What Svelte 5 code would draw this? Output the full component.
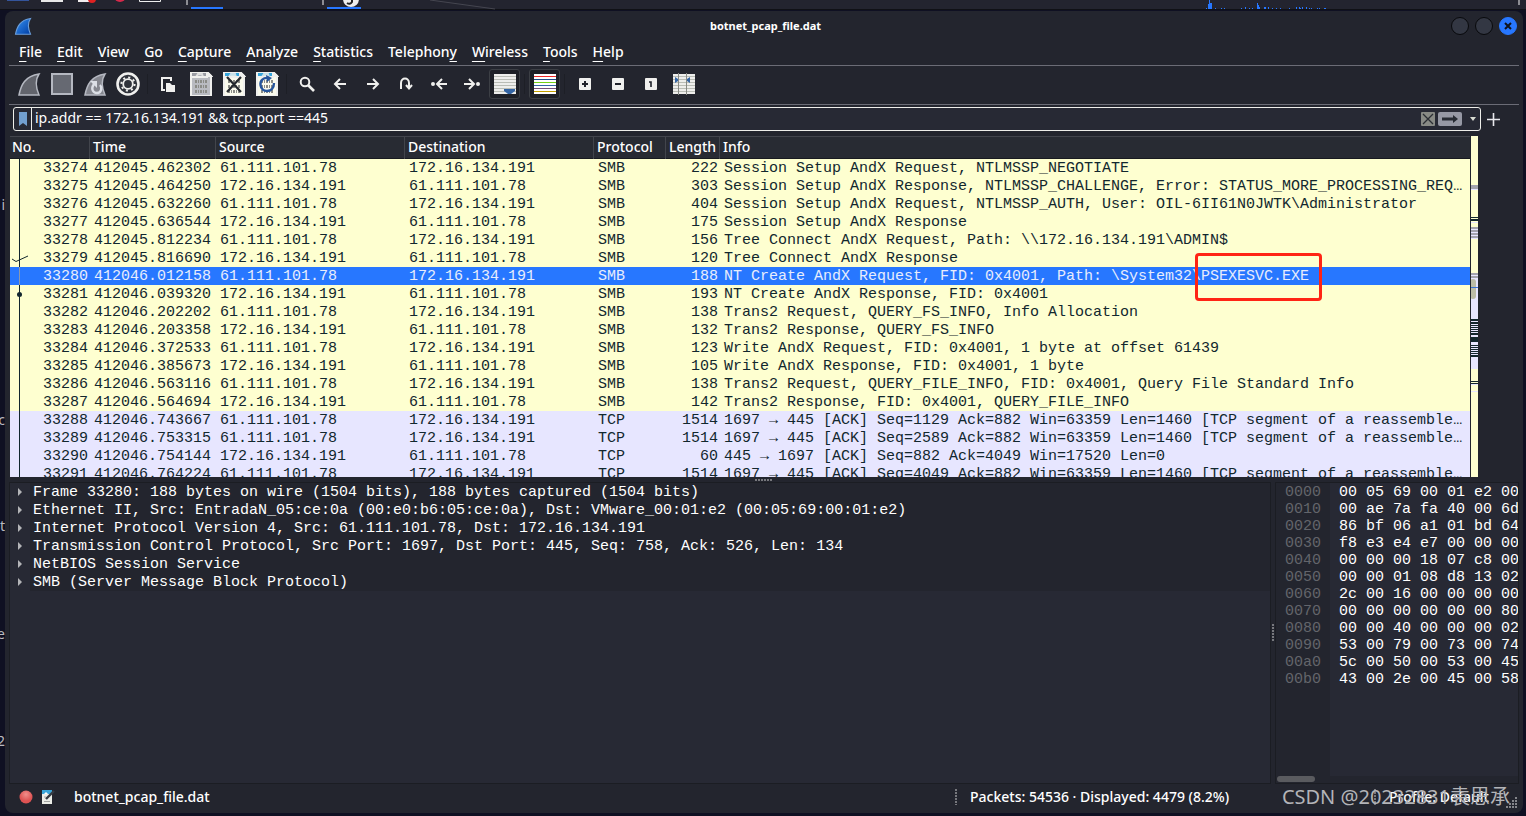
<script>
  const menus = [
    ['', 'F', 'ile'], ['', 'E', 'dit'], ['', 'V', 'iew'], ['', 'G', 'o'], ['', 'C', 'apture'], ['', 'A', 'nalyze'],
    ['', 'S', 'tatistics'], ['Telephon', 'y', ''], ['', 'W', 'ireless'], ['', 'T', 'ools'], ['', 'H', 'elp']
  ];
  const tools = [
    'start', 'stop', 'restart', 'options', '|', 'open', 'save', 'close', 'reload', '|', 'find', 'back', 'forward',
    'goto', 'first', 'last', 'autoscroll', '|', 'colorize', '|', 'zoomin', 'zoomout', 'zoomreset', 'resize'
  ];
  const columns = ['No.', 'Time', 'Source', 'Destination', 'Protocol', 'Length', 'Info'];
  const A = '61.111.101.78';
  const B = '172.16.134.191';
  const packets = [
    [33274, '412045.462302', A, B, 'SMB', 222, 'Session Setup AndX Request, NTLMSSP_NEGOTIATE'],
    [33275, '412045.464250', B, A, 'SMB', 303, 'Session Setup AndX Response, NTLMSSP_CHALLENGE, Error: STATUS_MORE_PROCESSING_REQUIRED'],
    [33276, '412045.632260', A, B, 'SMB', 404, 'Session Setup AndX Request, NTLMSSP_AUTH, User: OIL-6II61N0JWTK\\Administrator'],
    [33277, '412045.636544', B, A, 'SMB', 175, 'Session Setup AndX Response'],
    [33278, '412045.812234', A, B, 'SMB', 156, 'Tree Connect AndX Request, Path: \\\\172.16.134.191\\ADMIN$'],
    [33279, '412045.816690', B, A, 'SMB', 120, 'Tree Connect AndX Response'],
    [33280, '412046.012158', A, B, 'SMB', 188, 'NT Create AndX Request, FID: 0x4001, Path: \\System32\\', 'PSEXESVC.EXE'],
    [33281, '412046.039320', B, A, 'SMB', 193, 'NT Create AndX Response, FID: 0x4001'],
    [33282, '412046.202202', A, B, 'SMB', 138, 'Trans2 Request, QUERY_FS_INFO, Info Allocation'],
    [33283, '412046.203358', B, A, 'SMB', 132, 'Trans2 Response, QUERY_FS_INFO'],
    [33284, '412046.372533', A, B, 'SMB', 123, 'Write AndX Request, FID: 0x4001, 1 byte at offset 61439'],
    [33285, '412046.385673', B, A, 'SMB', 105, 'Write AndX Response, FID: 0x4001, 1 byte'],
    [33286, '412046.563116', A, B, 'SMB', 138, 'Trans2 Request, QUERY_FILE_INFO, FID: 0x4001, Query File Standard Info'],
    [33287, '412046.564694', B, A, 'SMB', 142, 'Trans2 Response, FID: 0x4001, QUERY_FILE_INFO'],
    [33288, '412046.743667', A, B, 'TCP', 1514, '1697 → 445 [ACK] Seq=1129 Ack=882 Win=63359 Len=1460 [TCP segment of a reassembled PDU]'],
    [33289, '412046.753315', A, B, 'TCP', 1514, '1697 → 445 [ACK] Seq=2589 Ack=882 Win=63359 Len=1460 [TCP segment of a reassembled PDU]'],
    [33290, '412046.754144', B, A, 'TCP', 60, '445 → 1697 [ACK] Seq=882 Ack=4049 Win=17520 Len=0'],
    [33291, '412046.764224', A, B, 'TCP', 1514, '1697 → 445 [ACK] Seq=4049 Ack=882 Win=63359 Len=1460 [TCP segment of a reassembled PDU]']
  ];
  const details = [
    'Frame 33280: 188 bytes on wire (1504 bits), 188 bytes captured (1504 bits)',
    'Ethernet II, Src: EntradaN_05:ce:0a (00:e0:b6:05:ce:0a), Dst: VMware_00:01:e2 (00:05:69:00:01:e2)',
    'Internet Protocol Version 4, Src: 61.111.101.78, Dst: 172.16.134.191',
    'Transmission Control Protocol, Src Port: 1697, Dst Port: 445, Seq: 758, Ack: 526, Len: 134',
    'NetBIOS Session Service',
    'SMB (Server Message Block Protocol)'
  ];
  const bytes = [
    '00 05 69 00 01 e2 00', '00 ae 7a fa 40 00 6d', '86 bf 06 a1 01 bd 64', 'f8 e3 e4 e7 00 00 00',
    '00 00 00 18 07 c8 00', '00 00 01 08 d8 13 02', '2c 00 16 00 00 00 00', '00 00 00 00 00 00 80',
    '00 00 40 00 00 00 02', '53 00 79 00 73 00 74', '5c 00 50 00 53 00 45', '43 00 2e 00 45 00 58'
  ];
  const offsets = bytes.map((_, i) => (i * 16).toString(16).padStart(4, '0'));
  // minimap stripes: top, height, colour
  const D = '#12272e', L = '#e7e6ff', G = '#a3a3ad';
  const stripes = [
    [49, 4, G], [53, 1, L], [81, 1, D], [83, 2, D], [86, 1, L], [91, 2, G], [93, 1, L], [94, 2, G], [96, 1, L], [97, 2, G],
    [99, 1, L], [100, 2, G], [102, 1, L], [137, 2, G], [139, 1, L], [140, 2, G], [142, 91, L], [183, 2, D], [186, 2, D],
    [189, 1, D], [191, 1, D], [193, 1, D], [195, 1, D], [197, 2, D], [201, 5, D], [209, 1, D], [211, 1, D],
    [213, 1, D], [215, 1, D], [217, 1, D], [219, 2, D], [245, 1, D], [247, 1, D], [248, 1, L], [255, 1, L]
  ];
  const spikes = [[1206, 1], [1208, 5], [1209, 9], [1210, 6], [1211, 6], [1215, 1], [1221, 1], [1224, 1], [1241, 1], [1245, 2], [1249, 1],
    [1252, 1], [1257, 6], [1258, 4], [1259, 2], [1264, 2], [1265, 2], [1268, 2], [1272, 1], [1276, 1], [1280, 1], [1289, 1], [1296, 2],
    [1299, 2], [1300, 1], [1302, 2], [1306, 2], [1309, 1], [1311, 1], [1317, 1], [1319, 1], [1324, 1], [1325, 1]];
  const strays = [[196, 'i'], [411, 'c'], [517, 't'], [625, 're'], [732, '2']];
  let filter = $state('ip.addr == 172.16.134.191 && tcp.port ==445');
</script>

{#snippet fin(fill, edge)}
  <path d="M2 23 C4 13 8 4 22 2 C18 8 19 16 22 23 Z" fill={fill} stroke={edge} stroke-width="1.5" />
{/snippet}

{#snippet sheet(top, body)}
  <path d="M2 0H18L22 4V24H2Z" fill={body} />
  <path d="M2 0H18V5H2Z" fill={top} />
  <path d="M7 5 9 2H13L14 5Z" fill={body} opacity=".8" />
  <path d="M18 0 22 4H18Z" fill="#d5d7d9" />
  <g stroke="#8b8c87" stroke-width="3" stroke-dasharray="2 1 1 1"><path d="M6 9.500H18M6 14.500H18M6 19.500H18" /></g>
{/snippet}

{#snippet icon(name)}
  <svg width="25" height="24" viewBox="-1 0 25 24" fill="none" stroke="#f0f0ee" stroke-width="2" aria-hidden="true">
    {#if name === 'start'}
      {@render fin('#62646c', '#b5b8c1')}
    {:else if name === 'stop'}
      <rect x="2" y="2" width="20" height="20" fill="#666972" stroke="#b5b8c1" />
    {:else if name === 'restart'}
      {@render fin('#85878f', '#b5b8c1')}
      <path d="M11 12C7 18 11 21 14 21C19 21 19 15 17 13" stroke="#dcdfe6" stroke-width="2.4" /><path d="M7 9H14V16Z" fill="#dcdfe6" stroke="none" />
    {:else if name === 'options'}
      <circle cx="12" cy="12" r="10.5" fill="#30333b" stroke-width="2.6" />
      <circle cx="12" cy="12" r="4.8" stroke-width="1.8" />
      <circle cx="12" cy="12" r="6.6" stroke-width="2" stroke-dasharray="2.1 3.08" />
    {:else if name === 'open'}
      <path d="M15 9V6H6V18H9" /><path d="M10 11H14L16 13H19V20H10Z" fill="#f0f0ee" stroke="none" />
    {:else if name === 'save'}
      {@render sheet('#9a9ca4', '#b9bbc1')}
    {:else if name === 'close'}
      {@render sheet('#35a5dc', '#fbfbed')}
      <path d="M5 5 19 20M19 5 5 20" stroke="#25292e" stroke-width="2.2" />
    {:else if name === 'reload'}
      {@render sheet('#35a5dc', '#fbfbed')}
      <path d="M14 6C8 5 5 9 5.500 13C6 17 9 19 12 19C16 19 19 16 19 11" stroke="#26559c" stroke-width="2.4" /><path d="M11 3 17 6 12 10Z" fill="#26559c" stroke="none" />
    {:else if name === 'find'}
      <circle cx="10" cy="10" r="4.300" /><path d="M13 13 19 19" stroke-width="2.6" />
    {:else if name === 'back'}
      <path d="M18 12H8M12 7 7 12 12 17" />
    {:else if name === 'forward'}
      <path d="M6 12H16M12 7 17 12 12 17" />
    {:else if name === 'goto'}
      <path d="M7 17V11C7 5 15 5 15 11V16M12 13 15 16.500 18 13" />
    {:else if name === 'first'}
      <path d="M20 12H11M15 7 10 12 15 17" /><circle cx="6" cy="12" r="1" />
    {:else if name === 'last'}
      <path d="M4 12H13M9 7 14 12 9 17" /><circle cx="18" cy="12" r="1" />
    {:else if name === 'autoscroll'}
      <path d="M1 2H23V22H1Z" fill="#eeeeec" stroke="none" />
      <path d="M1 4.500H23M1 7.500H23M1 10.500H23M1 13.500H23M1 16.500H23M1 19.500H23" stroke="#babdb6" stroke-width="1" />
      <path d="M11 17H22V19L18 22H15L11 19Z" fill="#3465a4" stroke="none" />
    {:else if name === 'colorize'}
      <path d="M1 2H23V22H1Z" fill="#fff" stroke="none" />
      <g stroke-width="1"><path d="M1 4.500H23" stroke="#ef2929" /><path d="M1 7.500H23" stroke="#204a87" /><path d="M1 10.500H23" stroke="#73d216" /><path d="M1 13.500H23" stroke="#3465a4" /><path d="M1 16.500H23" stroke="#75507b" /><path d="M1 19.500H23" stroke="#c4a000" /></g>
    {:else if name === 'resize'}
      <path d="M1 2H23V22H1Z" fill="#eeeeec" stroke="none" />
      <path d="M1 4.500H23M1 7.500H23M1 10.500H23M1 13.500H23M1 16.500H23M1 19.500H23" stroke="#babdb6" stroke-width="1" />
      <path d="M6.500 1V23M14.500 1V23" stroke="#888a85" stroke-width="1" />
      <path d="M3 5 6 7V9L3 11ZM18 5 15 7V9L18 11Z" fill="#3465a4" stroke="none" />
    {:else}
      <rect x="6" y="6" width="12" height="12" rx="1" fill="#f0f0ee" stroke="none" />
      <g stroke="#20222a">
        {#if name === 'zoomin'}<path d="M9 12H15M12 9V15" />{:else if name === 'zoomout'}<path d="M9 12H15" />{:else}<path d="M10 10H12V15" stroke-width="1.600" />{/if}
      </g>
    {/if}
  </svg>
{/snippet}

<div class="desktop">
  <div class="taskbar">
    <svg width="500" height="10" viewBox="0 0 500 10" aria-hidden="true">
      <rect x="7" width="22" height="1" fill="#34549b" /><rect x="41" width="22" height="2" fill="#e8e8e8" />
      <rect x="78" width="14" height="2" fill="#f2eeee" /><circle cx="92" cy="-1" r="4" fill="#e02222" />
      <circle cx="120" cy="-4" r="6" fill="#d5294a" /><path d="M139.500 0V1.500H160.500V0" fill="none" stroke="#eee" />
      <rect x="186" width="2" height="5" fill="#8d8d93" /><rect x="191" y="7" width="32" height="2" fill="#2777ff" />
      <rect x="322" width="2" height="5" fill="#8d8d93" /><rect x="327" y="7" width="34" height="2" fill="#2777ff" />
      <circle cx="351" cy="-1" r="8" fill="#eee" /><path d="M352 0V2Q350 5 347 3" fill="none" stroke="#222" stroke-width="2" />
      <path d="M430 0 495 9" stroke="#454650" />
    </svg>
    <svg width="350" height="10" viewBox="1176 0 350 10" aria-hidden="true">
      {#each spikes as [x, h]}<rect {x} y={9 - h} width="1" height={h} fill="#2777ff" />{/each}
      <rect x="1518" width="2" height="5" fill="#8d8d93" />
    </svg>
  </div>
  {#each strays as [y, t]}<span class="stray" style:top="{y}px">{t}</span>{/each}

  <main class="window">
    <header class="titlebar">
      <svg width="18" height="18" viewBox="0 0 24 24" aria-hidden="true">
        <defs><linearGradient id="blue" x1="0" y1="0" x2="1" y2="1"><stop offset="0" stop-color="#3794f4" /><stop offset="1" stop-color="#003ca3" /></linearGradient></defs>
        {@render fin('url(#blue)', '#6c9fdc')}
      </svg>
      <h1>botnet_pcap_file.dat</h1>
      <div class="winbtns">
        <button aria-label="Minimize"></button>
        <button aria-label="Maximize"></button>
        <button class="x" aria-label="Close"><svg width="8" height="8" viewBox="0 0 8 8"><path d="M1 1 7 7M7 1 1 7" stroke="#10131b" stroke-width="2" /></svg></button>
      </div>
    </header>

    <nav class="menu">
      {#each menus as [pre, key, post]}<button>{pre}<u>{key}</u>{post}</button>{/each}
    </nav>

    <div class="toolbar">
      {#each tools as t}
        {#if t === '|'}<span class="sep"></span>
        {:else}<button class:on={t === 'autoscroll' || t === 'colorize'} aria-label={t}>{@render icon(t)}</button>{/if}
      {/each}
    </div>

    <div class="filterrow">
      <div class="filter">
        <button class="mark" aria-label="Bookmark"><svg width="8" height="14" viewBox="0 0 8 14"><path d="M0 0H8V14L4 11 0 14Z" fill="#729fcf" /></svg></button>
        <input aria-label="Display filter" spellcheck="false" bind:value={filter} />
        <button aria-label="Clear"><svg width="14" height="14" viewBox="0 0 14 14"><rect width="14" height="14" rx="1" fill="#888a85" /><path d="M2 2 12 12M12 2 2 12" stroke="#2a2d33" stroke-width="1.300" /></svg></button>
        <button aria-label="Apply"><svg width="24" height="14" viewBox="0 0 24 14"><rect width="24" height="14" rx="2" fill="#9698a4" /><path d="M4 5.500H15V3L20 7 15 11V8.500H4Z" fill="#262a32" /></svg></button>
        <button class="caret" aria-label="History"><svg width="6" height="4" viewBox="0 0 6 4"><path d="M0 0H6L3 4Z" fill="#d8dbd2" /></svg></button>
      </div>
      <button aria-label="Add"><svg width="13" height="13" viewBox="0 0 13 13"><path d="M6.500 0V13M0 6.500H13" stroke="#e8e8ec" stroke-width="1.600" /></svg></button>
    </div>

    <section class="list">
      <div class="tablebox">
        <table>
          <colgroup><col class="c1" /><col class="c2" /><col class="c3" /><col class="c3" /><col class="c5" /><col class="c6" /><col /></colgroup>
          <thead><tr>{#each columns as c}<th>{c}</th>{/each}</tr></thead>
          <tbody>
            {#each packets as [no, time, src, dst, proto, len, info, hit]}
              <tr class:tcp={proto === 'TCP'} class:sel={hit}>
                <td class="num first">
                  {#if no === 33279}<svg class="glyph" width="18" height="8" viewBox="0 0 18 8"><path d="M1 4 5 6.500 17 1" fill="none" stroke="#12272e" /></svg>{/if}
                  {#if no === 33281}<i class="dot"></i>{/if}
                  {no}</td>
                <td>{time}</td><td>{src}</td><td>{dst}</td><td>{proto}</td><td class="num">{len}</td>
                <td class="info">{info}{#if hit}<span class="hit">{hit}</span>{/if}</td>
              </tr>
            {/each}
          </tbody>
        </table>
      </div>
      <svg class="minimap" viewBox="0 0 8 341" preserveAspectRatio="none" aria-hidden="true">
        <rect width="8" height="341" fill="#feffd0" />
        {#each stripes as [y, h, c]}<rect {y} width="8" height={h} fill={c} />{/each}
        <rect y="143" width="6" height="20" rx="3" fill="#bcbca6" /><rect y="151" width="8" height="1" fill="#3a72d5" />
        <rect width="1" height="341" fill="#23252e" />
      </svg>
    </section>

    <div class="grip"></div>

    <section class="lower">
      <ul class="tree">
        {#each details as d}
          <li><button><svg width="4" height="8" viewBox="0 0 4 8"><path d="M0 0 4 4 0 8Z" fill="#b4b5b8" /></svg><span>{d}</span></button></li>
        {/each}
      </ul>
      <div class="vgrip"></div>
      <div class="hex">
        <pre class="off">{offsets.join('\n')}</pre>
        <pre class="dump">{bytes.join('\n')}</pre>
        <div class="scroll"><i></i></div>
      </div>
    </section>

    <footer>
      <svg width="14" height="14" viewBox="0 0 14 14"><defs><radialGradient id="red" cy=".3"><stop offset="0" stop-color="#f08f8b" /><stop offset="1" stop-color="#dd5353" /></radialGradient></defs><circle cx="7" cy="7" r="6.500" fill="url(#red)" /></svg>
      <svg width="14" height="14" viewBox="0 0 14 14"><path d="M1 0H11V14H1Z" fill="#eceee8" /><path d="M1 0H11V4H1Z" fill="#3aa5d8" /><path d="M3 4 5 2 7 4Z" fill="#fff" /><path d="M5 9 13 1" stroke="#363b42" stroke-width="2.400" /><path d="M3 7H5M3 11.500H9" stroke="#a3a5a3" /></svg>
      <span class="file">botnet_pcap_file.dat</span>
      <i class="vdots"></i>
      <span class="count">Packets: 54536 · Displayed: 4479 (8.2%)</span>
      <i class="vdots"></i>
      <span class="profile">Profile: Default</span>
      <svg width="12" height="12" viewBox="0 0 12 12"><g fill="#85868b"><path d="M9 0h2v2h-2zM6 3h2v2H6zM9 3h2v2H9zM3 6h2v2H3zM6 6h2v2H6zM9 6h2v2H9zM0 9h2v2H0zM3 9h2v2H3zM6 9h2v2H6zM9 9h2v2H9z" /></g></svg>
    </footer>
  </main>
  <div class="watermark">CSDN @20232831袁思承</div>
</div>

<style>
  :global(body) { margin: 0; background: #0f1022; }
  .desktop { position: relative; display: flex; flex-direction: column; height: 100vh; box-sizing: border-box; padding: 0 3px 3px 5px; overflow: hidden; background: #0f1022; color: #fff; font: 500 14px/20px "Noto Sans", sans-serif; }
  button { display: inline-flex; align-items: center; justify-content: center; padding: 0; border: 0; background: none; color: inherit; font: inherit; }
  .taskbar { display: flex; justify-content: space-between; flex: none; height: 10px; margin: 0 -3px 1px -5px; background: #23242f; border-bottom: 1px solid #101116; box-sizing: border-box; }
  .stray { position: absolute; right: calc(100% - 5px); font-size: 14px; line-height: 18px; font-weight: 400; color: #b9bac0; }

  .window { position: relative; flex: 1; min-height: 0; display: flex; flex-direction: column; padding: 0 4px; border-radius: 8px; background: #23252e; }
  .titlebar { display: grid; grid-template-columns: 1fr auto 1fr; align-items: center; flex: none; height: 31px; padding: 0 2px 2px 5px; box-sizing: border-box; }
  h1 { margin: 0; font-size: 11px; line-height: 16px; font-weight: 700; }
  .winbtns { display: flex; gap: 6px; justify-content: flex-end; }
  .winbtns button { width: 18px; height: 18px; border: 1px solid #08090c; border-radius: 50%; background: #333743; }
  .winbtns .x { background: #2777ff; border-color: #2777ff; }

  .menu { display: flex; gap: 15px; flex: none; height: 23px; padding-left: 10px; border-bottom: 1px solid #6b6c76; }
  .menu button { height: 20px; display: block; line-height: 20px; }
  .menu u { text-underline-offset: 4px; text-decoration-thickness: 1px; text-decoration-skip-ink: none; }

  .toolbar { display: flex; align-items: center; flex: none; height: 36px; padding: 0 0 2px 3px; border-bottom: 1px solid #6b6c76; }
  .toolbar button { flex: none; width: 33px; height: 32px; }
  .toolbar .on { width: 31px; height: 30px; margin: 0 1px; box-sizing: border-box; border: 1px solid #3c3f45; border-radius: 3px; background: #1e2027; }
  .sep { width: 1px; height: 20px; margin: 0 3px; background: #1d1f26; }

  .filterrow { display: flex; align-items: center; gap: 6px; flex: none; height: 31px; padding: 0 19px 2px 4px; box-sizing: border-box; }
  .filter { display: flex; align-items: center; flex: 1; height: 24px; box-sizing: border-box; border: 1px solid #eeeeea; border-radius: 3px; background: #272934; gap: 3px; padding-right: 4px; margin-top: -1px; }
  .mark { width: 18px; height: 22px; box-sizing: border-box; border-right: 1px solid #eeeeea; }
  .filter input { flex: 1; min-width: 0; height: 20px; margin-bottom: 2px; padding: 0; border: 0; outline: 0; background: none; color: #fff; font: inherit; font-weight: 400; }
  .caret { margin-left: 5px; }

  .list { display: flex; flex: 341 1 0; min-height: 0; padding-left: 1px; padding-right: 41px; }
  .tablebox { flex: 1; min-width: 0; overflow: hidden; }
  table { width: 100%; border-collapse: collapse; table-layout: fixed; }
  .c1 { width: 80px; } .c2 { width: 126px; } .c3 { width: 189px; } .c5 { width: 72px; } .c6 { width: 54px; }
  th { height: 22px; box-sizing: border-box; padding: 0 0 2px 3px; text-align: left; font-weight: 500; line-height: 18px; background: #282b33; border-top: 1px solid #42444c; box-shadow: inset -1px 0 #42454c, inset 0 -1px #181a20; }
  th:first-child { padding-left: 2px; }
  th:last-child { box-shadow: inset 0 -1px #181a20; }
  td { height: 16px; padding: 2px 0 0 4px; overflow: hidden; white-space: pre; font: 15px/16px "Liberation Mono", monospace; }
  tbody tr { background: #feffd0; color: #12272e; }
  tbody .tcp { background: #e7e6ff; }
  tbody .sel { background: #2777ff; color: #e8edfc; }
  .num { padding: 2px 2px 0 0; text-align: right; }
  .first { position: relative; white-space: nowrap; background: linear-gradient(#12272e, #12272e) 9px 0 / 1px 100% no-repeat; }
  .sel .first { background-image: linear-gradient(#8c98ad, #8c98ad); }
  .glyph { position: absolute; left: 1px; bottom: 4px; }
  .dot { position: absolute; left: 7px; top: 7px; width: 5px; height: 5px; border-radius: 50%; background: #12272e; }
  .info { text-overflow: ellipsis; padding-right: 7px; }
  .sel .info { overflow: visible; }
  .hit { position: relative; }
  .hit::after { content: ""; position: absolute; inset: -15px -13px -16px -6px; border: 3px solid #ff2414; border-radius: 4px; }
  .minimap { flex: none; width: 8px; height: 100%; }

  .grip { flex: none; height: 5px; background: repeating-linear-gradient(90deg, #77787d 0 2px, transparent 2px 3px) center 2px / 18px 2px no-repeat; }
  .lower { display: flex; flex: 302 1 0; min-height: 0; }
  .tree { flex: 1; min-width: 0; margin: 0; padding: 0; list-style: none; border: 1px solid #1b1d23; background: #272934; overflow: hidden; }
  .tree button { display: flex; gap: 9px; width: 100%; height: 18px; padding-left: 8px; justify-content: flex-start; font: 15px/16px "Liberation Mono", monospace; white-space: pre; }
  .tree li span { flex: 1; text-align: left; padding: 2px 0 0 3px; margin-left: -1px; background: #23252e; }
  .vgrip { flex: none; width: 4px; background: repeating-linear-gradient(#77787d 0 2px, transparent 2px 3px) 1px center / 2px 18px no-repeat; }
  .hex { flex: none; width: 244px; box-sizing: border-box; display: grid; grid-template: 1fr 7px / 54px 1fr; border: 1px solid #1b1d23; overflow: hidden; }
  pre { margin: 0; padding: 1px 0 0 9px; font: 15px/17px "Liberation Mono", monospace; overflow: hidden; }
  .off { color: #63656b; }
  .dump { background: #272934; }
  .scroll { grid-column: 1 / 3; padding-left: 1px; }
  .scroll i { display: block; width: 38px; height: 6px; border-radius: 3px; background: #5a5b5f; }

  footer { display: flex; align-items: center; flex: none; height: 29px; padding: 0 1px 4px 10px; box-sizing: border-box; }
  footer svg { flex: none; margin-right: 8px; }
  .file { flex: 1; margin-left: 11px; }
  .vdots { width: 2px; height: 16px; background: repeating-linear-gradient(#77787d 0 2px, transparent 2px 3px); }
  .count { width: 417px; padding-left: 13px; box-sizing: border-box; }
  .profile { width: 130px; padding-left: 13px; box-sizing: border-box; }
  footer svg:last-child { margin: 12px 0 0; }
  .watermark { position: absolute; right: 16px; bottom: 6px; font: 20px/26px "Noto Sans", "Noto Sans CJK SC", sans-serif; color: #b3b4b8; white-space: nowrap; }
</style>
